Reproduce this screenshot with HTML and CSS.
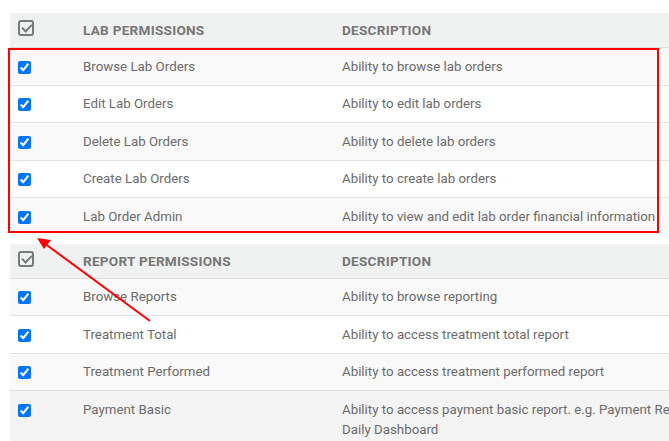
FILE: index.html
```html
<!DOCTYPE html>
<html lang="en">
<head>
  <meta charset="UTF-8">
  <meta name="viewport" content="width=device-width, initial-scale=1.0">
  <title>Permissions</title>
  <link rel="stylesheet" href="styles.css">
</head>
<body>
  <div class="page">
    <table class="perm-table">
      <colgroup>
        <col class="col-check">
        <col class="col-name">
        <col class="col-desc">
      </colgroup>
      <thead>
        <tr>
          <th><span class="all-check"></span></th>
          <th>Lab Permissions</th>
          <th>Description</th>
        </tr>
      </thead>
      <tbody>
        <tr><td><input type="checkbox" checked></td><td>Browse Lab Orders</td><td>Ability to browse lab orders</td></tr>
        <tr><td><input type="checkbox" checked></td><td>Edit Lab Orders</td><td>Ability to edit lab orders</td></tr>
        <tr><td><input type="checkbox" checked></td><td>Delete Lab Orders</td><td>Ability to delete lab orders</td></tr>
        <tr><td><input type="checkbox" checked></td><td>Create Lab Orders</td><td>Ability to create lab orders</td></tr>
        <tr><td><input type="checkbox" checked></td><td>Lab Order Admin</td><td>Ability to view and edit lab order financial information</td></tr>
      </tbody>
    </table>

    <table class="perm-table">
      <colgroup>
        <col class="col-check">
        <col class="col-name">
        <col class="col-desc">
      </colgroup>
      <thead>
        <tr>
          <th><span class="all-check"></span></th>
          <th>Report Permissions</th>
          <th>Description</th>
        </tr>
      </thead>
      <tbody>
        <tr><td><input type="checkbox" checked></td><td>Browse Reports</td><td>Ability to browse reporting</td></tr>
        <tr><td><input type="checkbox" checked></td><td>Treatment Total</td><td>Ability to access treatment total report</td></tr>
        <tr><td><input type="checkbox" checked></td><td>Treatment Performed</td><td>Ability to access treatment performed report</td></tr>
        <tr class="hover"><td><input type="checkbox" checked></td><td>Payment Basic</td><td>Ability to access payment basic report. e.g. Payment Reports, Daily Dashboard</td></tr>
      </tbody>
    </table>
  </div>

  <div class="highlight"></div>
  <svg class="arrow" width="669" height="441" viewBox="0 0 669 441">
    <line x1="150" y1="321" x2="44" y2="243" stroke="#f00" stroke-width="2"/>
    <polygon points="37,238 51,240 44,249" fill="#f00"/>
  </svg>
</body>
</html>
```

FILE: styles.css
```css
body {
  margin: 0;
  font-family: Roboto, "Liberation Sans", Arial, sans-serif;
  font-size: 13.3px;
  color: #6b6b6b;
  background: #fff;
  overflow: hidden;
}
.page {
  padding: 13px 0 0 10px;
  width: 710px;
}
.perm-table {
  width: 710px;
  border-collapse: collapse;
  table-layout: fixed;
  margin-bottom: 9px;
}
.col-check {
  width: 65px;
}
.col-name {
  width: 259px;
}
.perm-table th,
.perm-table td {
  padding: 8px;
  line-height: 20px;
  text-align: left;
  vertical-align: top;
}
.perm-table th {
  background: #f0f1f1;
  color: #777;
  font-size: 13.6px;
  font-weight: bold;
  letter-spacing: 0.25px;
  text-transform: uppercase;
  padding-top: 7px;
  padding-bottom: 7px;
  border-bottom: 1px solid #ddd;
}
.perm-table td {
  border-top: 1px solid #e2e2e2;
  padding-top: 8.5px;
  padding-bottom: 8px;
}
.perm-table tbody tr:first-child td {
  border-top: none;
}
.perm-table tbody tr:nth-child(odd) {
  background: #f9f9f9;
}
.perm-table tbody tr.hover {
  background: #f4f4f4;
}
.perm-table input[type="checkbox"] {
  margin: 4px 0 0 0;
  width: 13px;
  height: 13px;
  vertical-align: top;
}
.all-check {
  display: inline-block;
  box-sizing: border-box;
  width: 16px;
  height: 16px;
  border: 2px solid #7a7a7a;
  border-radius: 3px;
  position: relative;
  vertical-align: top;
}
.all-check::after {
  content: "";
  position: absolute;
  left: 4px;
  top: 0;
  width: 4px;
  height: 8px;
  border-right: 2px solid #7a7a7a;
  border-bottom: 2px solid #7a7a7a;
  transform: rotate(45deg);
}
.highlight {
  position: absolute;
  left: 8px;
  top: 48px;
  width: 647px;
  height: 181px;
  border: 2px solid #f00;
}
.arrow {
  position: absolute;
  left: 0;
  top: 0;
  pointer-events: none;
}
```
